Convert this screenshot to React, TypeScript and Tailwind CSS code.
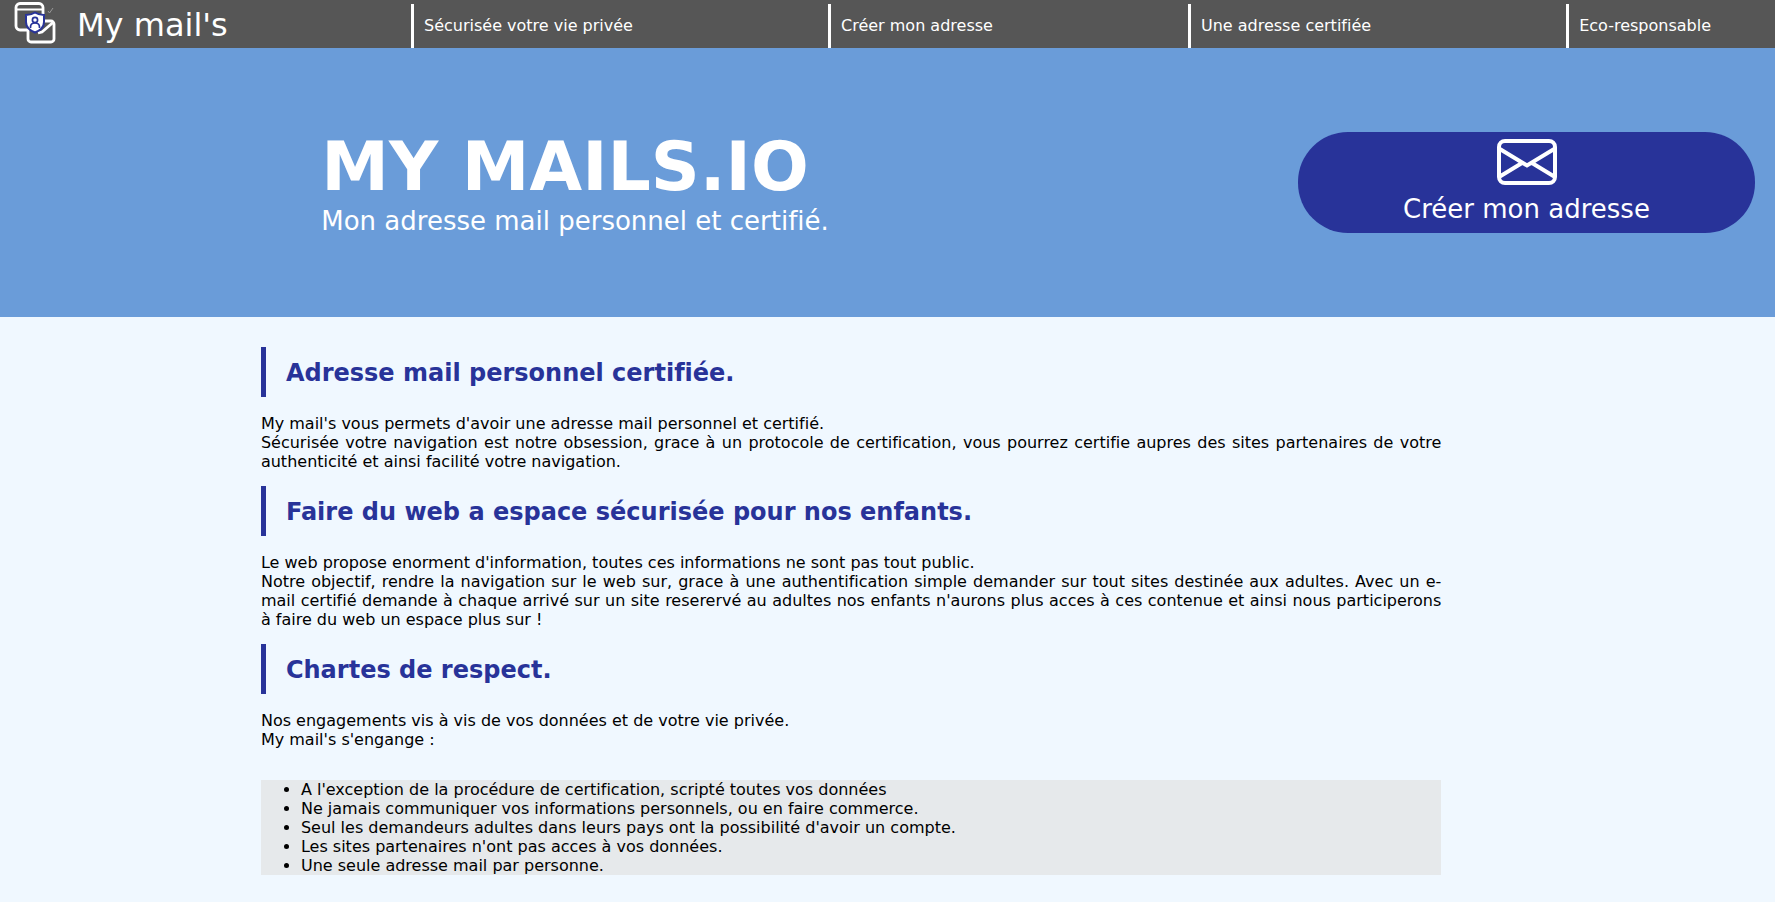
import React from "react";

const links = [
  "Sécurisée votre vie privée",
  "Créer mon adresse",
  "Une adresse certifiée",
  "Eco-responsable",
];

const commitments = [
  "A l'exception de la procédure de certification, scripté toutes vos données",
  "Ne jamais communiquer vos informations personnels, ou en faire commerce.",
  "Seul les demandeurs adultes dans leurs pays ont la possibilité d'avoir un compte.",
  "Les sites partenaires n'ont pas acces à vos données.",
  "Une seule adresse mail par personne.",
];

export default function App() {
  return (
    <div className="min-h-screen bg-[#f0f8ff] font-[Verdana,'DejaVu_Sans',sans-serif] text-base leading-[19px] text-black [font-variant-ligatures:none]">
      <Header />
      <Hero />
      <main className="ml-[14.7%] mr-[18.8%] pt-[30px] pb-7 text-justify">
        <Section title="Adresse mail personnel certifiée.">
          My mail's vous permets d'avoir une adresse mail personnel et certifié.
          <br />
          Sécurisée votre navigation est notre obsession, grace à un protocole
          de certification, vous pourrez certifie aupres des sites partenaires
          de votre authenticité et ainsi facilité votre navigation.
        </Section>

        <Section title="Faire du web a espace sécurisée pour nos enfants.">
          Le web propose enorment d'information, toutes ces informations ne sont
          pas tout public.
          <br />
          Notre objectif, rendre la navigation sur le web sur, grace à une
          authentification simple demander sur tout sites destinée aux adultes.
          Avec un e-mail certifié demande à chaque arrivé sur un site reserervé
          au adultes nos enfants n'aurons plus acces à ces contenue et ainsi
          nous participerons à faire du web un espace plus sur !
        </Section>

        <Section title="Chartes de respect.">
          Nos engagements vis à vis de vos données et de votre vie privée.
          <br />
          My mail's s'engange :
        </Section>

        <ul className="mt-4 list-disc bg-[#e6e9eb] pl-10">
          {commitments.map((item) => (
            <li key={item}>{item}</li>
          ))}
        </ul>
      </main>
    </div>
  );
}

const Header = () => (
  <header className="flex h-12 bg-[#565656] text-white">
    <a href="#" className="flex w-[411px] items-center gap-5 pl-3.5">
      <LogoIcon />
      <span className="pt-0.5 text-[32px] leading-10">My mail's</span>
    </a>
    <nav className="flex flex-1 justify-between pt-1 pr-16">
      {links.map((link) => (
        <a
          key={link}
          href="#"
          className="flex items-center border-l-3 border-white pb-0.5 pl-2.5 whitespace-nowrap"
        >
          {link}
        </a>
      ))}
    </nav>
  </header>
);

const Hero = () => (
  <section className="flex h-[269px] items-center justify-between bg-[#6a9cd9] pr-5 pl-[18.1%] text-white">
    <div>
      <h1 className="text-[68px] leading-[76px] font-bold">MY MAILS.IO</h1>
      <p className="text-[26px] leading-8">
        Mon adresse mail personnel et certifié.
      </p>
    </div>
    <button
      type="button"
      className="flex h-[101px] w-[457px] cursor-pointer flex-col items-center rounded-[50px] bg-[#283399] pt-[7px] text-[26px] leading-8"
    >
      <EnvelopeIcon />
      <span className="mt-2">Créer mon adresse</span>
    </button>
  </section>
);

const Section = ({
  title,
  children,
}: {
  title: string;
  children: React.ReactNode;
}) => (
  <section>
    <h2 className="flex h-[50px] items-center border-l-5 border-[#283399] pt-0.5 pl-5 text-2xl font-bold text-[#283399]">
      {title}
    </h2>
    <p className="pt-[17px] pb-[15px]">{children}</p>
  </section>
);

const LogoIcon = () => (
  <svg width="43" height="44" viewBox="0 0 43 44" fill="none">
    <g stroke="#fff" strokeWidth="2.800">
      <path d="M14 28H6a4 4 0 0 1-4-4V5.500a4 4 0 0 1 4-4h19a4 4 0 0 1 4 4V16" />
      <path d="M2 7.500h27" strokeWidth="2" />
      <path d="M14 27v10a3 3 0 0 0 3 3h20a3 3 0 0 0 3-3V22a3 3 0 0 0-3-3h-8" />
      <path d="M39 20.500 28 30l-4 1" />
    </g>
    <path
      d="M21 10.500c3 2 6 2.500 9 2.500v7c0 5-4 8.500-9 10.500-5-2-9-5.500-9-10.500v-7c3 0 6-.5 9-2.500z"
      fill="#fff"
      stroke="#283399"
      strokeWidth="2"
    />
    <circle cx="21" cy="18" r="2.600" stroke="#283399" strokeWidth="1.700" />
    <path
      d="M16.500 26v-1c0-3 2-4 4.500-4s4.500 1 4.500 4v1"
      stroke="#283399"
      strokeWidth="1.700"
    />
    <path d="m34 9 1.500 2L39 6" stroke="#999" />
  </svg>
);

const EnvelopeIcon = () => (
  <svg
    width="60"
    height="46"
    viewBox="0 0 60 46"
    fill="none"
    stroke="#fff"
    strokeWidth="4"
  >
    <rect x="2" y="2" width="56" height="42" rx="6" />
    <path d="m2 9.500 28 17 28-17M2 38l23-14M58 38 35 24" />
  </svg>
);
